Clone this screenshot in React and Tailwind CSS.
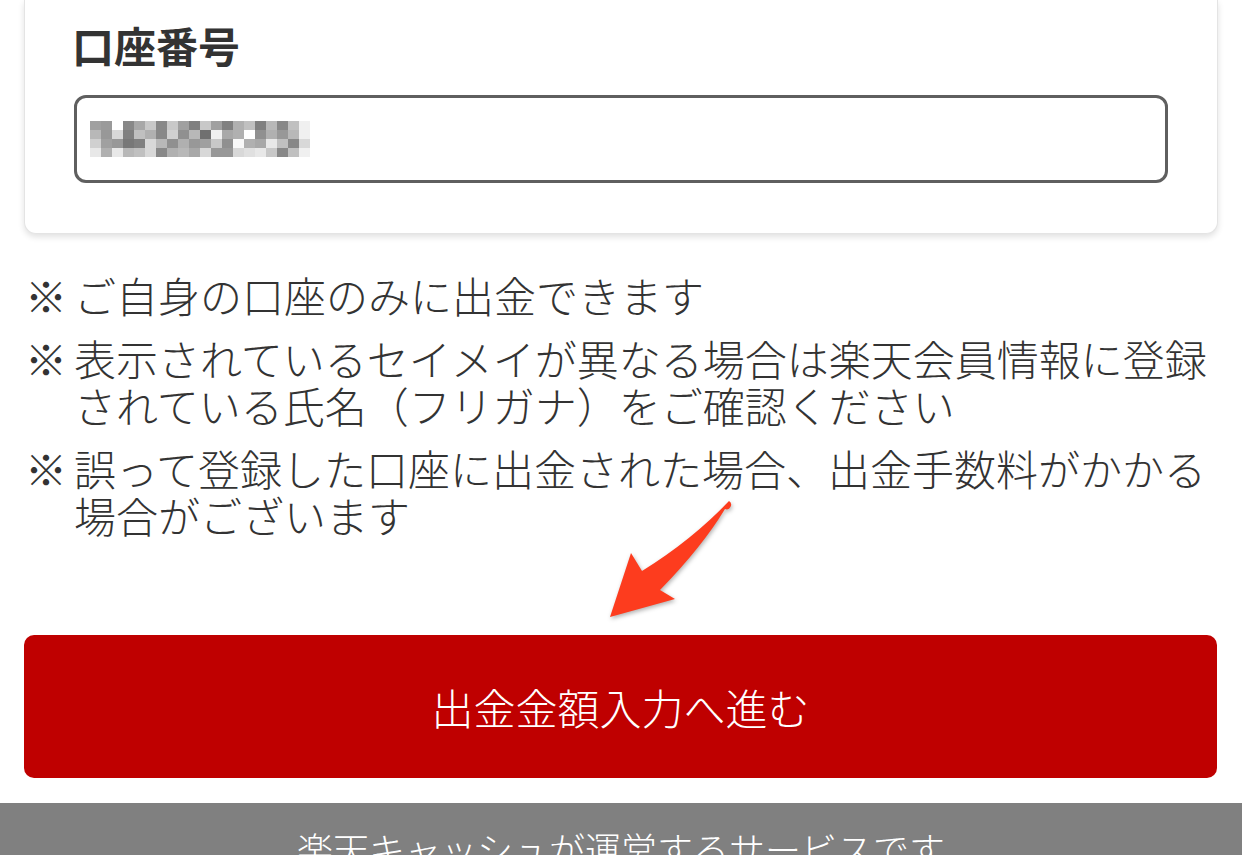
import React from "react";

const jp = { fontFamily: '"Noto Sans CJK JP", "Noto Sans", sans-serif' };

// mosaic that hides the account number
const mosaic = [
  ["a0", "9a", "ff", "88", "a8", "c8", "88", "c8", "a0", "80", "c8", "a0", "80", "b0", "c0", "80", "b8", "88", "c0", "f0"],
  ["b8", "98", "d8", "80", "c0", "b0", "88", "d0", "90", "b8", "70", "f0", "a8", "b0", "ff", "90", "b0", "98", "b8", "f0"],
  ["d0", "a0", "98", "78", "80", "d8", "b8", "90", "b0", "98", "a0", "c8", "90", "f8", "b0", "a8", "e8", "c0", "88", "d8"],
  ["e8", "b0", "e8", "b8", "c0", "d8", "88", "b0", "b8", "a8", "d8", "98", "98", "d8", "e0", "e8", "c8", "88", "c0", "f0"],
];

const Mosaic = () => (
  <svg width="220" height="36" viewBox="0 0 220 36" shapeRendering="crispEdges">
    {mosaic.map((row, r) =>
      row.map((g, c) => (
        <rect key={`${r}-${c}`} x={c * 11} y={r * 9} width="11" height="9" fill={`#${g}${g}${g}`} />
      )),
    )}
  </svg>
);

const Note = ({ children }) => (
  <li className="flex text-[42px] font-light leading-[47px] text-[#333]">
    <span className="w-[49px] shrink-0">※</span>
    <span>{children}</span>
  </li>
);

const Arrow = () => (
  <svg
    className="pointer-events-none absolute left-0 top-0"
    width="1242"
    height="855"
    viewBox="0 0 1242 855"
    style={{ filter: "drop-shadow(1px 2px 2px rgba(0,0,0,0.3))" }}
  >
    <path
      d="M 729 501 Q 692 540 642 571 L 631 553 L 610 617 L 675 599 L 660 590 Q 702 547 725 509 A 4.5 4.5 0 0 0 729 501 Z"
      fill="#fd3c1e"
    />
  </svg>
);

export default function App() {
  return (
    <div className="relative h-[855px] w-[1242px] overflow-hidden bg-white" style={jp}>
      <div className="mx-[24px] rounded-b-[12px] border border-t-0 border-[#e4e4e4] bg-white px-[49px] pb-[50px] pt-[15px] shadow-[0_3px_6px_rgba(0,0,0,0.12)]">
        <h2 className="-ml-[2px] text-[42px] font-bold leading-[60px] text-[#333]">口座番号</h2>
        <div className="mt-[20px] flex h-[88px] items-center rounded-[12px] border-[3px] border-[#5f5f5f] pl-[13px]">
          <Mosaic />
        </div>
      </div>

      <ul className="ml-[25px] mr-[26px] mt-[37px] flex flex-col gap-[16px]">
        <Note>ご自身の口座のみに出金できます</Note>
        <Note>表示されているセイメイが異なる場合は楽天会員情報に登録されている氏名（フリガナ）をご確認ください</Note>
        <Note>誤って登録した口座に出金された場合、出金手数料がかかる場合がございます</Note>
      </ul>

      <button className="mx-[24px] mt-[97px] flex h-[143px] w-[1193px] items-center justify-center rounded-[10px] bg-[#bf0000] text-[42px] font-light text-white">
        出金金額入力へ進む
      </button>

      <div className="mt-[25px] h-[60px] bg-[#808080] pt-[18px] text-center text-[36px] font-light leading-[54px] text-white">
        楽天キャッシュが運営するサービスです
      </div>

      <Arrow />
    </div>
  );
}
